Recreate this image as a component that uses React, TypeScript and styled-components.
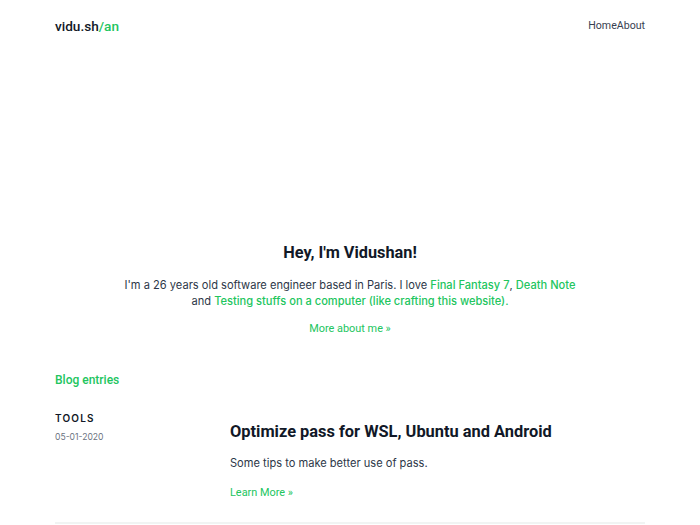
import React from "react";
import styled, { createGlobalStyle } from "styled-components";

const Global = createGlobalStyle`
  html, body { margin: 0; padding: 0; background: #ffffff; }
  body { font-family: Inter, "Noto Sans", sans-serif; color: #374151; }
  * { box-sizing: border-box; }
  a { text-decoration: none; }
`;

const GREEN = "#22c55e";

const Page = styled.div`
  width: 590px;
  margin: 0 auto;
`;

const Header = styled.header`
  display: flex;
  align-items: center;
  justify-content: space-between;
  height: 51px;
`;

const Logo = styled.a`
  font-family: Roboto, sans-serif;
  font-weight: 500;
  font-size: 13.6px;
  color: #111827;
  span { color: ${GREEN}; }
`;

const Nav = styled.nav`
  display: flex;
  font-family: Roboto, sans-serif;
  font-size: 10.6px;
`;

const NavLink = styled.a`
  color: #374151;
`;

const Hero = styled.section`
  padding-top: 190px;
  display: flex;
  flex-direction: column;
  align-items: center;
  text-align: center;
`;

const HeroTitle = styled.h1`
  margin: 0;
  font-family: Roboto, sans-serif;
  font-size: 16.3px;
  font-weight: 700;
  color: #111827;
  line-height: 24px;
`;

const HeroText = styled.p`
  margin: 12px 0 0;
  font-size: 11.1px;
  line-height: 16px;
  color: #2d3748;
  max-width: 470px;
`;

const Accent = styled.a`
  color: ${GREEN};
  font-weight: 500;
`;

const MoreLink = styled.a<{ $gap: number }>`
  display: block;
  margin-top: ${(p) => p.$gap}px;
  font-family: Roboto, sans-serif;
  font-size: 10.9px;
  line-height: 16px;
  color: ${GREEN};
`;

const Section = styled.section`
  margin-top: 35px;
`;

const SectionTitle = styled.h2`
  margin: 0;
  font-family: Roboto, sans-serif;
  font-size: 12px;
  font-weight: 500;
  line-height: 16px;
  color: ${GREEN};
`;

const Post = styled.article`
  display: grid;
  grid-template-columns: 175px 1fr;
  margin-top: 22px;
  padding-bottom: 21px;
  border-bottom: 2px solid #f1f4f3;
`;

const Meta = styled.div`
  display: flex;
  flex-direction: column;
`;

const Category = styled.span`
  font-size: 10px;
  font-weight: 600;
  letter-spacing: 1.2px;
  line-height: 16px;
  color: #111827;
`;

const DateText = styled.span`
  margin-top: 4px;
  font-size: 8.6px;
  line-height: 14px;
  color: #6b7280;
`;

const Body = styled.div`
  display: flex;
  flex-direction: column;
  align-items: flex-start;
  padding-top: 11px;
`;

const PostTitle = styled.h3`
  margin: 0;
  font-family: Roboto, sans-serif;
  font-size: 16.4px;
  font-weight: 700;
  line-height: 22px;
  color: #111827;
`;

const PostText = styled.p`
  margin: 12px 0 0;
  font-size: 11.1px;
  line-height: 16px;
  color: #2d3748;
`;

export default function App() {
  return (
    <>
      <Global />
      <Page>
        <Header>
          <Logo href="#">
            vidu.sh<span>/an</span>
          </Logo>
          <Nav>
            <NavLink href="#">Home</NavLink>
            <NavLink href="#">About</NavLink>
          </Nav>
        </Header>
        <Hero>
          <HeroTitle>Hey, I'm Vidushan!</HeroTitle>
          <HeroText>
            I'm a 26 years old software engineer based in Paris. I love{" "}
            <Accent href="#">Final Fantasy 7</Accent>,{" "}
            <Accent href="#">Death Note</Accent> and{" "}
            <Accent href="#">Testing stuffs on a computer (like crafting this website).</Accent>
          </HeroText>
          <MoreLink $gap={12} href="#">More about me »</MoreLink>
        </Hero>
        <Section>
          <SectionTitle>Blog entries</SectionTitle>
          <Post>
            <Meta>
              <Category>TOOLS</Category>
              <DateText>05-01-2020</DateText>
            </Meta>
            <Body>
              <PostTitle>Optimize pass for WSL, Ubuntu and Android</PostTitle>
              <PostText>Some tips to make better use of pass.</PostText>
              <MoreLink $gap={14} href="#">Learn More »</MoreLink>
            </Body>
          </Post>
        </Section>
      </Page>
    </>
  );
}
